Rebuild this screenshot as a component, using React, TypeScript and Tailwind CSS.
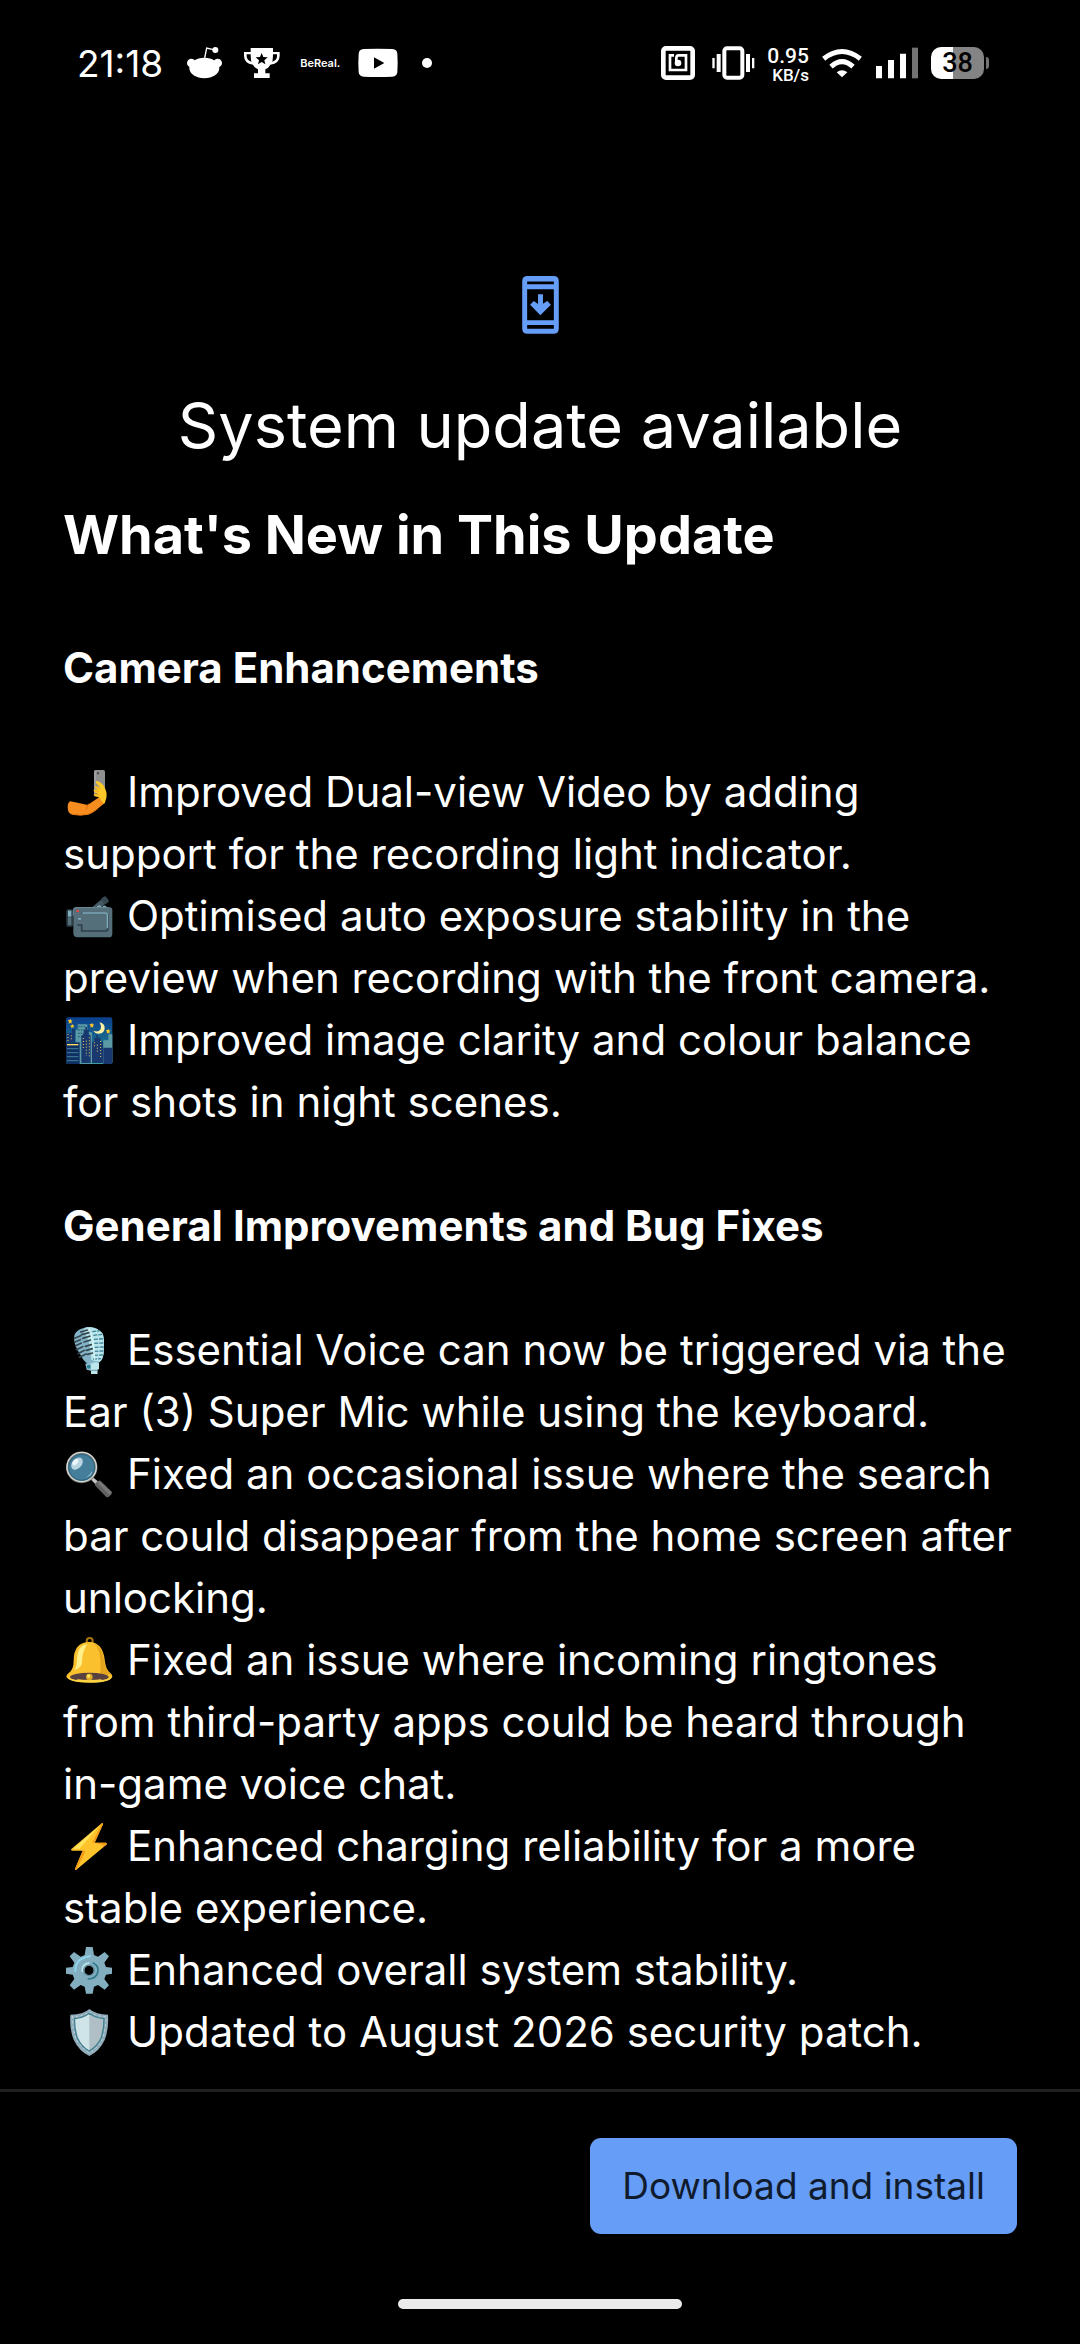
import type { ReactNode } from "react";

type Note = {
  icon: ReactNode;
  text: string;
};

type SectionProps = {
  title: string;
  notes: Note[];
};

const SelfieIcon = () => (
  <svg viewBox="33 27 141 141" className="inline-block size-[47px] align-[-9px]" aria-hidden="true">
    <path d="M118 35q0-5 5-5h22q5 0 5 5v66h-32z" fill="#8f8f8f" />
    <path d="M118 35q0-5 3-5v72h-3z" fill="#bdbdbd" />
    <circle cx="129" cy="40" r="3" fill="#333" />
    <path d="M46 124q-8 4-8 17 0 20 12 22 30 5 50 0 12-4 28-17l22-18-18-16-34 23q-28-6-52-11z" fill="#f78c1f" />
    <path d="M101 131q-6 6-7 18" stroke="#d96c10" strokeWidth="3" fill="none" />
    <path d="M50 163q26 5 50 0 12-4 28-17" stroke="#e67612" strokeWidth="3" fill="none" />
    <path d="M131 111q-15-2-15-7t14-2q-15-5-14-12 2-4 13 1-9-6-10-11 2-5 17 4-11-12-14-17 0-5 5-4 17 7 22 20 8 14 5 31-3 12-7 18z" fill="#ffca28" />
    <path d="M116 90l17 5M117 79l18 8M117 104h17" stroke="#e89b18" strokeWidth="2" />
  </svg>
);

const VideoCameraIcon = () => (
  <svg viewBox="33 24 141 141" className="inline-block size-[47px] align-[-9px]" aria-hidden="true">
    <path d="M112 66l33-28 11 14-20 16z" fill="#455a64" />
    <rect x="141" y="35" width="17" height="21" rx="4" fill="#37474f" transform="rotate(-36 150 45)" />
    <path d="M127 66q6-6 10 0M143 66q6-5 10 0" stroke="#82aec0" strokeWidth="4" />
    <rect x="34" y="73" width="20" height="52" rx="5" fill="#2f3f48" />
    <path d="M39 77h10v18H39z" fill="#82aec0" />
    <path d="M39 97h10v23H39z" fill="#546e7a" />
    <path d="M62 67h102q8 0 8 9v70q0 11-10 11H68q-13 0-13-13V76q0-9 7-9z" fill="#546e7a" />
    <path d="M55 92V77q0-9 8-9h98" stroke="#708f9c" strokeWidth="3" fill="none" />
    <path d="M80 84h70q8 0 8 9v38q0 7-7 7H80v-18H67" fill="none" stroke="#2f3f48" strokeWidth="5" />
    <path d="M82 84h69q6 0 6 8v38" fill="none" stroke="#82aec0" strokeWidth="4" />
    <circle cx="68" cy="78" r="4" fill="#f44336" />
    <path d="M69 99h9v5h-9z" fill="#82aec0" />
  </svg>
);

const NightIcon = () => (
  <svg viewBox="33 396 141 141" className="inline-block size-[47px] align-[-9px]" aria-hidden="true">
    <defs>
      <linearGradient id="night-sky" x1="0" y1="0" x2="0" y2="1">
        <stop stopColor="#0b3f8c" />
        <stop offset=".65" stopColor="#1d7891" />
        <stop offset="1" stopColor="#3ca0a0" />
      </linearGradient>
    </defs>
    <rect x="33" y="397" width="139" height="140" rx="7" fill="url(#night-sky)" />
    <path d="M62 434h6v-16h29v24h14v94H62zM145 466h15v-18h12v86h-27z" fill="#5b9aa5" />
    <path d="M69 425h22M69 435h22M69 445h22M69 455h22" stroke="#2a6788" strokeWidth="4" strokeDasharray="5 3" />
    <path d="M34 444h17v-12h9v39H34zM79 534v-82l7-5v-12h5v-9h5v9h5v12l6 5v82zM111 534v-64h7v-12h6v-8h5v8h8v12h7v64zM145 488h27v45l-6 4h-21z" fill="#18386f" />
    <path d="M33 472h41v65H40q-7 0-7-7z" fill="#103064" />
    <path d="M36 479h34" stroke="#ffdf61" strokeWidth="4" />
    <path d="M36 491h34M36 503h34M36 515h34M36 527h34" stroke="#3f8397" strokeWidth="3" />
    <path d="M39 447v22M49 451v18M85 459v30M94 467v46M103 457v58M118 472v17M127 479v27M137 468v53" stroke="#e9cf60" strokeWidth="3" strokeDasharray="3 6" />
    <path d="M133 412q16 3 16 17 0 16-17 17-12 0-17-9 14 6 21-3 5-10-3-22z" fill="#fff2a0" />
    <path d="M46 401l2 5 5 1-4 3 1 6-4-3-5 3 1-6-4-4 6-1zM52 417l2 4 4 1-3 3 1 5-4-3-4 3 1-5-4-3 5-1zM111 413l2 5 5 1-4 3 1 6-4-3-5 3 1-6-4-4 6-1zM160 431l2 5 5 1-4 3 1 6-4-3-5 3 1-6-4-4 6-1z" fill="#ffc928" />
  </svg>
);

const MicrophoneIcon = () => (
  <svg viewBox="33 36 141 141" className="inline-block size-[47px] align-[-9px]" aria-hidden="true">
    <path d="M57 72q-1-20 18-29l20-7q29-3 47 19 5 10 5 30l-1 30q-3 23-17 29l-31 2q-12-6-23-29Q60 96 57 72z" fill="#83b3c7" />
    <path d="M96 37q29-3 46 18 5 10 5 30l-1 30q-3 23-15 27l-22-8-7-54q-9-22-19-34z" fill="#b8e5eb" />
    <path d="M60 81l16-7M62 92l17-8M64 104l19-9M69 116l19-10M74 127l19-10M59 70l18-8M80 59l25-7M83 70l23-7M87 81l20-6M91 94l18-5M94 106l18-5M97 118l16-4M77 51l20-6" stroke="#35464f" strokeWidth="5" strokeLinecap="round" />
    <path d="M112 50l23-3M115 61l29-3M117 73l29-2M118 85l28-1M119 97l27-1M118 109l28-1M117 121l27-1M114 132l24-1" stroke="#3f8295" strokeWidth="4" strokeDasharray="12 3" />
    <path d="M102 41q14 35 17 93" stroke="#d9f5f5" strokeWidth="4" fill="none" />
    <path d="M91 146l40-9v26h-4v14h-19v-10l-13-3z" fill="#92bfd1" />
    <path d="M108 147q12-8 24-2v18h-5v14h-19z" fill="#bde5ec" />
    <circle cx="101" cy="155" r="6" fill="#2a7f90" />
    <path d="M108 166h19" stroke="#659caf" strokeWidth="3" />
  </svg>
);

const MagnifierIcon = () => (
  <svg viewBox="33 409 141 141" className="inline-block size-[47px] align-[-9px]" aria-hidden="true">
    <path d="M113 487l18 15-8 8-17-17z" fill="#c1c4c5" />
    <path d="M125 502q7-8 13-2l32 31q3 5-5 12-8 8-12 3l-32-33q-4-4 4-11z" fill="#616161" />
    <path d="M135 500l35 33-7 7-36-36z" fill="#787878" />
    <circle cx="80" cy="458" r="44" fill="#457e9a" stroke="#727272" strokeWidth="7" />
    <circle cx="80" cy="457" r="44" fill="none" stroke="#d9d9d4" strokeWidth="4" />
    <circle cx="80" cy="458" r="39" fill="none" stroke="#2e657e" strokeWidth="3" />
    <ellipse cx="66" cy="447" rx="21" ry="14" fill="#b8d5e0" transform="rotate(-48 66 447)" />
    <ellipse cx="61" cy="442" rx="11" ry="7" fill="#edf7f9" transform="rotate(-48 61 442)" />
    <path d="M88 489q17-4 22-19 4 14-22 19z" fill="#b4d6e3" />
  </svg>
);

const BellIcon = () => (
  <svg viewBox="33 24 141 141" className="inline-block size-[47px] align-[-9px]" aria-hidden="true">
    <circle cx="104" cy="36" r="9" fill="none" stroke="#a87511" strokeWidth="6" />
    <path d="M56 95q0-55 47-56 40 1 46 53 3 30 17 40 6 5 6 11-10 17-69 17-60 0-69-17 1-7 8-12 14-10 14-36z" fill="#fbc02d" />
    <path d="M119 44q25 12 28 48 3 31 19 42-11 9-31 10 3-20 1-50-2-34-17-50z" fill="#e3a51e" />
    <path d="M66 92q1-42 30-46-15 23-15 54 0 15-23 24 8-12 8-32z" fill="#fff08a" />
    <ellipse cx="103" cy="144" rx="58" ry="13" fill="#594142" />
    <path d="M34 142q12 10 30 11 36-22 78 0 20-3 30-10-8 18-69 18-61 0-69-19z" fill="#ffd443" />
    <ellipse cx="103" cy="144" rx="55" ry="9" fill="#594142" />
    <circle cx="103" cy="144" r="10" fill="#dda822" />
    <circle cx="101" cy="141" r="5" fill="#ffe65c" />
  </svg>
);

const BoltIcon = () => (
  <svg viewBox="33 24 141 141" className="inline-block size-[47px] align-[-9px]" aria-hidden="true">
    <path d="M141 24q4-1 3 4l-25 55h33q6 2 2 6l-90 75q-5 3-4-2l23-55H51q-5-2-1-6z" fill="#ffc42b" />
    <path d="M135 31L55 101h18z" fill="#ffe45d" />
    <path d="M141 24q4-1 3 4l-25 55h-7zM64 164q-5 3-4-2l23-55 9 1zM119 83h33q6 2 2 6l-14 10 5-9z" fill="#f29b18" />
  </svg>
);

const GearIcon = () => (
  <svg viewBox="33 397 141 141" className="inline-block size-[47px] align-[-9px]" aria-hidden="true">
    <path
      fillRule="evenodd"
      d="M93 397h20l4 24 12 5 20-14 13 13-14 19 5 13 18 2v18l-18 3-5 13 14 19-13 13-20-14-12 5-4 21H93l-4-21-12-5-20 14-13-13 14-19-5-13-20-3v-18l20-2 5-13-14-19 13-13 20 14 12-5zm9 56a14 14 0 100 28 14 14 0 000-28z"
      fill="#82aec0"
    />
    <path d="M61 469q0-39 44-44" stroke="#90d5ec" strokeWidth="6" fill="none" strokeLinecap="round" />
    <path d="M83 472q-2-23 20-26" stroke="#b9e4ea" strokeWidth="8" fill="none" />
    <path d="M113 444q18 8 16 25-3 24-31 24" stroke="#2f7889" strokeWidth="5" fill="none" />
    <circle cx="102" cy="467" r="16" fill="none" stroke="#628fa0" strokeWidth="4" />
  </svg>
);

const ShieldIcon = () => (
  <svg viewBox="33 583 141 141" className="inline-block size-[47px] align-[-9px]" aria-hidden="true">
    <path d="M103 583q20 17 56 17 3 43-10 76-16 34-46 48-31-15-47-49-13-32-10-75 39 0 57-17z" fill="#91acbb" />
    <path d="M103 596q18 14 44 16 0 34-9 59-12 25-35 38-24-13-36-39-9-25-8-58 26-2 44-16z" fill="#b0bec5" stroke="#3d8290" strokeWidth="4" />
    <path d="M103 598v109q-22-13-33-38-9-24-9-55 24-2 42-16z" fill="#cfe4e9" />
    <path d="M52 606q1 39 11 66 12 24 40 43 27-16 39-42 11-31 11-67-32-1-50-15-18 14-51 15z" fill="none" stroke="#d0dce2" strokeWidth="3" strokeDasharray="3 12" strokeLinecap="round" />
  </svg>
);

const cameraNotes: Note[] = [
  { icon: <SelfieIcon />, text: "Improved Dual-view Video by adding support for the recording light indicator." },
  { icon: <VideoCameraIcon />, text: "Optimised auto exposure stability in the preview when recording with the front camera." },
  { icon: <NightIcon />, text: "Improved image clarity and colour balance for shots in night scenes." },
];

const generalNotes: Note[] = [
  { icon: <MicrophoneIcon />, text: "Essential Voice can now be triggered via the Ear (3) Super Mic while using the keyboard." },
  { icon: <MagnifierIcon />, text: "Fixed an occasional issue where the search bar could disappear from the home screen after unlocking." },
  { icon: <BellIcon />, text: "Fixed an issue where incoming ringtones from third-party apps could be heard through in-game voice chat." },
  { icon: <BoltIcon />, text: "Enhanced charging reliability for a more stable experience." },
  { icon: <GearIcon />, text: "Enhanced overall system stability." },
  { icon: <ShieldIcon />, text: "Updated to August 2026 security patch." },
];

function StatusBar() {
  return (
    <header className="flex h-[126px] items-center justify-between pr-[91px] pl-[77px]">
      <div className="flex items-center">
        <time className="text-[37px] leading-none">21:18</time>
        <svg viewBox="380 45 105 108" className="ml-6 h-9 w-[35px]" fill="#fff" aria-label="Reddit">
          <ellipse cx="432" cy="114" rx="45" ry="31" />
          <circle cx="393" cy="99" r="13" />
          <circle cx="472" cy="99" r="13" />
          <circle cx="465" cy="60" r="9" />
          <path d="M433 84l6-30 20 5" fill="none" stroke="#fff" strokeWidth="4" />
        </svg>
        <svg viewBox="553 45 108 108" className="ml-[22px] size-9" fill="#fff" aria-label="Trophy">
          <path fillRule="evenodd" d="M573 54h67v12h20v11q0 23-28 27-5 10-15 14v12h13v14h-47v-14h12v-12q-10-4-15-14-27-4-27-27V66h20zm-12 19v5q0 13 14 17-2-8-2-22zm79 0q0 14-2 22 14-4 14-17v-5zM606 69l-5 12-13 1 10 9-3 12 11-7 11 7-3-12 10-9-13-1z" />
        </svg>
        <span className="ml-5 text-[11px] leading-none font-semibold">BeReal.</span>
        <svg viewBox="894 45 120 108" className="ml-[18px] h-9 w-10" aria-label="YouTube">
          <path fillRule="evenodd" d="M911 57q42-2 86 0 14 1 15 14 2 28 0 56-1 12-15 13-44 2-86 0-14-1-15-13-2-28 0-56 1-13 15-14zm31 25v34l31-17z" fill="#fff" />
        </svg>
        <span className="ml-6 size-[10px] rounded-full bg-white" />
      </div>
      <div className="flex items-center">
        <svg viewBox="60 45 102 108" className="h-9 w-[34px]" fill="none" stroke="#fff" aria-label="NFC">
          <rect x="67" y="55" width="88" height="88" rx="8" strokeWidth="14" />
          <path d="M99 76H87v44h48V76h-22q-7 0-7 9v14" strokeWidth="8" />
          <circle cx="111" cy="99" r="10" fill="#fff" stroke="none" />
        </svg>
        <svg viewBox="212 45 129 108" className="ml-[17px] h-9 w-[43px]" fill="#fff" aria-label="Vibrate">
          <rect x="249" y="55" width="54" height="88" rx="8" fill="none" stroke="#fff" strokeWidth="12" />
          <path d="M213 84h7v31h-7zM226 72h12v54h-12zM314 72h12v54h-12zM332 84h7v31h-7z" />
        </svg>
        <div className="ml-3 flex flex-col items-end pt-[3px] font-[Roboto,sans-serif] font-medium">
          <span className="text-[21px] leading-[21px]">0.95</span>
          <span className="text-[17px] leading-[17px]">KB/s</span>
        </div>
        <svg viewBox="546 45 120 108" className="ml-[13px] h-9 w-10" fill="none" stroke="#fff" strokeWidth="15" aria-label="Wi-Fi">
          <path d="M551 86q55-43 110 0M573 110q33-30 66 0" />
          <path d="M590 127q16-12 32 0l-16 15z" fill="#fff" stroke="none" />
        </svg>
        <svg viewBox="708 45 126 108" className="ml-[14px] h-9 w-[42px]" fill="#fff" aria-label="Signal">
          <path d="M708 108h18v37h-18zM744 90h18v55h-18zM780 71h18v74h-18z" />
          <path d="M816 53h18v92h-18z" fill="#737373" />
        </svg>
        <div className="ml-[13px] flex items-center gap-[2px]">
          <span className="flex h-8 w-[53px] items-center justify-center rounded-[10px] bg-linear-to-r from-white from-42% to-[#848484] to-42% font-[Roboto,sans-serif] text-[27px] leading-none font-medium text-black">
            38
          </span>
          <span className="h-3 w-[3px] rounded-r-sm bg-[#737373]" />
        </div>
      </div>
    </header>
  );
}

function Section({ title, notes }: SectionProps) {
  return (
    <section className="mt-[62px] text-[42px] leading-[62px]">
      <h3 className="mb-[62px] font-bold">{title}</h3>
      <ul>
        {notes.map((note) => (
          <li key={note.text}>
            <span className="mr-[14px] ml-[3px]">{note.icon}</span>
            {note.text}
          </li>
        ))}
      </ul>
    </section>
  );
}

export default function App() {
  return (
    <div className="flex min-h-screen flex-col bg-black font-[Inter,sans-serif] text-white">
      <StatusBar />
      <main className="flex-1 px-[63px] pt-[150px] pb-6">
        <svg viewBox="93 46 111 176" className="mx-auto h-[58px] w-[37px]" fill="#669df6" aria-hidden="true">
          <path fillRule="evenodd" d="M109 46h79q16 0 16 16v143q0 16-16 16h-79q-16 0-16-16V62q0-16 16-16zm-1 17v8h81v-8zm0 23v94h81V86zm0 109v11h81v-11z" />
          <path d="M141 101h15v29l13-8 11 11-32 32-31-32 11-11 13 9z" />
        </svg>
        <h1 className="mt-[53px] text-center text-[63px] leading-[76px]">System update available</h1>
        <h2 className="mt-8 text-[54px] leading-[80px] font-bold">What's New in This Update</h2>
        <Section title="Camera Enhancements" notes={cameraNotes} />
        <Section title="General Improvements and Bug Fixes" notes={generalNotes} />
      </main>
      <footer className="flex flex-col border-t-[3px] border-[#202020] px-[63px] pt-[46px] pb-[35px]">
        <button type="button" className="h-24 self-end rounded-[11px] bg-[#669df6] px-8 text-[37px] text-[#101b2d]">
          Download and install
        </button>
        <div className="mt-[65px] h-[10px] w-[284px] self-center rounded-full bg-[#ebebeb]" />
      </footer>
    </div>
  );
}
